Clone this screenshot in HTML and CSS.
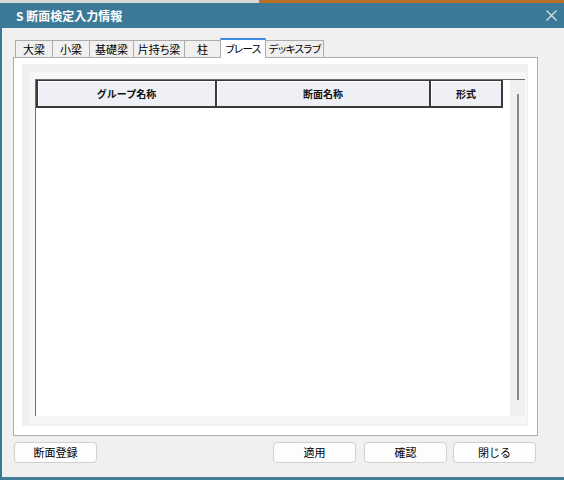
FILE: index.html
```html
<!DOCTYPE html>
<html lang="ja">
<head>
<meta charset="utf-8">
<link rel="stylesheet" href="styles.css">
</head>
<body>
<div class="topstrip"><div class="ts-left"></div><div class="ts-right"></div></div>
<div class="window">
  <div class="titlebar">
    <span class="title">S 断面検定入力情報</span>
    <svg class="close" width="11" height="11" viewBox="0 0 11 11"><path d="M0.5 0.5L10.5 10.5M10.5 0.5L0.5 10.5" stroke="#dfe8ee" stroke-width="1.1" fill="none"/></svg>
  </div>
  <div class="body">
    <div class="tabs">
      <div class="tab t1">大梁</div>
      <div class="tab t2">小梁</div>
      <div class="tab t3">基礎梁</div>
      <div class="tab t4">片持ち梁</div>
      <div class="tab t5">柱</div>
      <div class="tab t6 active kana">ブレース</div>
      <div class="tab t7 kana">デッキスラブ</div>
    </div>
    <div class="panel">
      <div class="page">
        <div class="frame">
          <div class="grid">
            <div class="grid-main">
              <div class="header">
                <div class="hcell c1">グループ名称</div>
                <div class="hcell c2">断面名称</div>
                <div class="hcell c3">形式</div>
              </div>
            </div>
            <div class="vscroll"><div class="thumb"></div></div>
          </div>
        </div>
      </div>
    </div>
    <div class="buttons">
      <div class="btn">断面登録</div>
      <div class="btn gap-big">適用</div>
      <div class="btn gap8">確認</div>
      <div class="btn gap6">閉じる</div>
    </div>
  </div>
</div>
</body>
</html>
```

FILE: styles.css
```css
html, body {
  margin: 0;
  padding: 0;
}
body {
  width: 564px;
  height: 480px;
  overflow: hidden;
  background: #f0f0f0;
  font-family: "Noto Sans CJK JP", "Noto Sans", sans-serif;
  color: #000;
}
.topstrip {
  display: flex;
  height: 3px;
}
.ts-left {
  width: 259px;
  background: #d8d8d8;
}
.ts-right {
  flex: 1;
  background: #b86f26;
}
.window {
  height: 477px;
  box-sizing: border-box;
  border-left: 2px solid #3b7997;
  border-bottom: 3px solid #447d97;
  display: flex;
  flex-direction: column;
  background: #f0f0f0;
}
.titlebar {
  height: 25px;
  flex: none;
  background: #3b7997;
  display: flex;
  align-items: center;
  justify-content: space-between;
  padding: 0 7px 0 14px;
  color: #fff;
}
.title {
  font-size: 12px;
  font-weight: bold;
  line-height: 1;
}
.close {
  display: block;
}
.body {
  padding: 10px 0 0 11px;
}
.tabs {
  display: flex;
  align-items: flex-end;
  height: 19px;
  margin-left: 2px;
  position: relative;
  z-index: 1;
}
.tab {
  box-sizing: border-box;
  height: 17px;
  border: 1px solid #acacac;
  border-bottom: none;
  background: #f0f0f0;
  font-size: 11px;
  line-height: 1;
  display: flex;
  align-items: center;
  justify-content: center;
  margin-left: -1px;
  font-feature-settings: "palt";
  white-space: nowrap;
}
.tab.kana {
  font-size: 10.5px;
  letter-spacing: -0.6px;
}
.tab.t1 { margin-left: 0; width: 38px; }
.tab.t2 { width: 38px; }
.tab.t3 { width: 45px; }
.tab.t4 { width: 52px; }
.tab.t5 { width: 37px; }
.tab.t6 { width: 46px; }
.tab.t7 { width: 59px; }
.tab.active {
  height: 20px;
  margin-bottom: -1px;
  background: #fff;
  border-top: 2px solid #3d8be0;
}
.panel {
  box-sizing: border-box;
  width: 525px;
  height: 379px;
  border: 1px solid #adadad;
  background: #fff;
  padding: 6px 9px 9px 8px;
}
.page {
  height: 100%;
  box-sizing: border-box;
  background: #f0f0f0;
  padding: 8px 1px 2px 7px;
}
.frame {
  height: 100%;
  box-sizing: border-box;
  background: #f6f6f6;
  padding: 7px 2px 8px 6px;
}
.grid {
  height: 100%;
  box-sizing: border-box;
  border-top: 1px solid #6e6e6e;
  border-left: 1px solid #6e6e6e;
  background: #fff;
  display: flex;
}
.grid-main {
  flex: 1;
}
.vscroll {
  width: 15px;
  flex: none;
  box-sizing: border-box;
  background: #f0f0f0;
  padding: 14px 0 0 7px;
}
.thumb {
  width: 2px;
  height: 306px;
  background: #8a8a8a;
}
.header {
  display: flex;
  width: 467px;
  height: 28px;
  box-sizing: border-box;
  border-top: 1px solid #3a3a3a;
  border-left: 2px solid #3a3a3a;
  border-bottom: 2px solid #3a3a3a;
  background: #eff0f5;
}
.hcell {
  box-sizing: border-box;
  border-right: 2px solid #3a3a3a;
  box-shadow: inset 1px 1px 0 #fff;
  font-size: 10px;
  font-weight: bold;
  line-height: 1;
  color: #111;
  display: flex;
  align-items: center;
  justify-content: center;
}
.c1 { width: 179px; }
.c2 { width: 214px; }
.c3 { width: 72px; }
.buttons {
  display: flex;
  margin-top: 6px;
  padding-left: 1px;
}
.btn {
  box-sizing: border-box;
  width: 83px;
  height: 21px;
  border: 1px solid #d0d0d0;
  border-radius: 4px;
  background: #fdfdfd;
  font-size: 11px;
  line-height: 1;
  display: flex;
  align-items: center;
  justify-content: center;
}
.gap-big { margin-left: 176px; }
.gap8 { margin-left: 8px; }
.gap6 { margin-left: 6px; }
```
